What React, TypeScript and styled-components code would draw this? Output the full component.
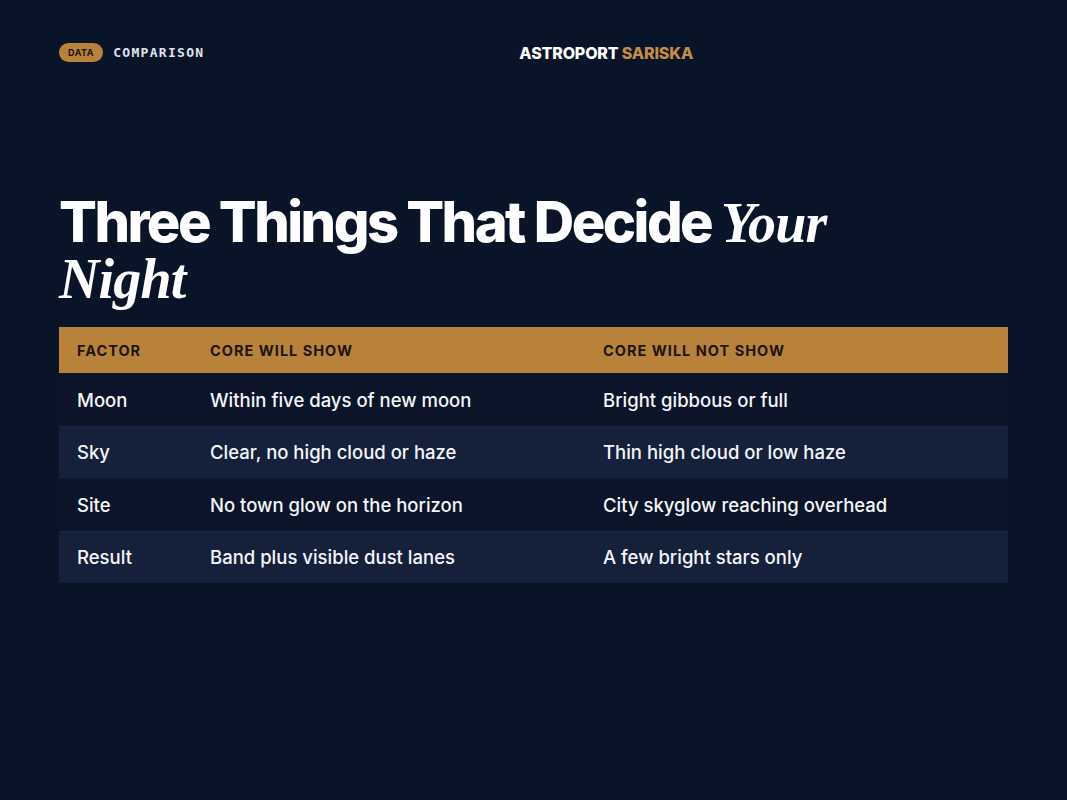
import React from "react";
import styled, { createGlobalStyle } from "styled-components";

const Global = createGlobalStyle`
  html, body { margin: 0; padding: 0; background: #0a1428; }
  body { font-family: Inter, "Noto Sans", sans-serif; }
`;

const Page = styled.div`
  width: 1067px;
  height: 800px;
  box-sizing: border-box;
  padding: 42px 59px 0 59px;
  background: #0a1428;
  color: #ffffff;
  display: flex;
  flex-direction: column;
`;

const TopBar = styled.header`
  display: flex;
  align-items: center;
  justify-content: space-between;
  height: 21px;
`;

const Kicker = styled.div`
  display: flex;
  align-items: center;
  gap: 10px;
`;

const Pill = styled.span`
  display: inline-flex;
  align-items: center;
  justify-content: center;
  height: 19px;
  padding: 0 9px;
  border-radius: 10px;
  background: #b9823a;
  color: #1a1408;
  font-family: Inter, sans-serif;
  font-size: 9px;
  font-weight: 700;
  letter-spacing: 0.06em;
`;

const KickerLabel = styled.span`
  font-family: "DejaVu Sans Mono", "Liberation Mono", monospace;
  font-size: 13px;
  font-weight: 700;
  letter-spacing: 0.1em;
  color: #dfe3ec;
`;

const Brand = styled.div`
  font-family: Inter, sans-serif;
  font-size: 16px;
  font-weight: 800;
  letter-spacing: -0.01em;
  color: #ffffff;
`;

const BrandAccent = styled.span`
  color: #c58d42;
`;

const Spacer = styled.span`
  width: 0;
`;

const Title = styled.h1`
  margin: 132px 0 0 0;
  font-family: Inter, sans-serif;
  font-size: 56px;
  font-weight: 800;
  line-height: 55px;
  letter-spacing: -0.045em;
  color: #ffffff;
  max-width: 800px;
`;

const TitleSerif = styled.em`
  font-family: "Liberation Serif", "DejaVu Serif", serif;
  font-style: italic;
  font-weight: 700;
  letter-spacing: -0.015em;
  font-size: 56px;
`;

const Table = styled.div`
  margin-top: 20px;
  display: grid;
  grid-template-columns: 133px 393px 1fr;
`;

const HeadCell = styled.div`
  background: #b9823a;
  height: 46px;
  display: flex;
  align-items: center;
  padding: 0 18px;
  font-family: Inter, sans-serif;
  font-size: 14.5px;
  font-weight: 700;
  letter-spacing: 0.07em;
  color: #1c160c;
`;

const Cell = styled.div<{ $alt: boolean }>`
  background: ${(p) => (p.$alt ? "#15203a" : "#0b1428")};
  border-top: 1px solid ${(p) => (p.$alt ? "#1b2740" : "#0f1a30")};
  height: 51.5px;
  display: flex;
  align-items: center;
  padding: 0 18px;
  font-family: Inter, sans-serif;
  font-size: 18.5px;
  font-weight: 500;
  color: #f4f6fa;
`;

const rows = [
  ["Moon", "Within five days of new moon", "Bright gibbous or full"],
  ["Sky", "Clear, no high cloud or haze", "Thin high cloud or low haze"],
  ["Site", "No town glow on the horizon", "City skyglow reaching overhead"],
  ["Result", "Band plus visible dust lanes", "A few bright stars only"],
];

export default function App() {
  return (
    <>
      <Global />
      <Page>
        <TopBar>
          <Kicker>
            <Pill>DATA</Pill>
            <KickerLabel>COMPARISON</KickerLabel>
          </Kicker>
          <Brand>
            ASTROPORT <BrandAccent>SARISKA</BrandAccent>
          </Brand>
          <Spacer />
        </TopBar>
        <Title>
          Three Things That Decide <TitleSerif>Your Night</TitleSerif>
        </Title>
        <Table>
          <HeadCell>FACTOR</HeadCell>
          <HeadCell>CORE WILL SHOW</HeadCell>
          <HeadCell>CORE WILL NOT SHOW</HeadCell>
          {rows.map((r, i) =>
            r.map((c, j) => (
              <Cell key={`${i}-${j}`} $alt={i % 2 === 1}>
                {c}
              </Cell>
            ))
          )}
        </Table>
      </Page>
    </>
  );
}
